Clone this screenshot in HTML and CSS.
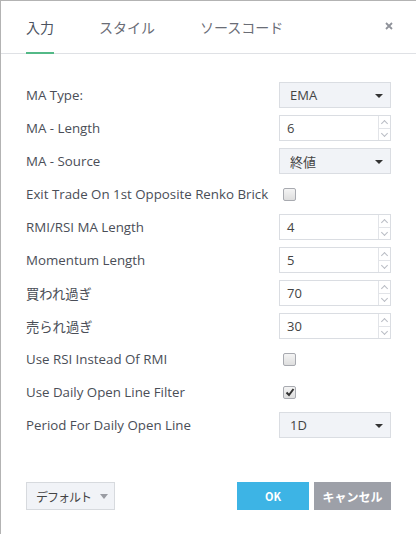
FILE: index.html
```html
<!DOCTYPE html>
<html lang="ja">
<head>
<meta charset="utf-8">
<link rel="stylesheet" href="styles.css">
</head>
<body>
<div class="dialog">
  <div class="tabs">
    <div class="tab active">入力</div>
    <div class="tab">スタイル</div>
    <div class="tab">ソースコード</div>
    <div class="close"><svg width="8" height="8" viewBox="0 0 8 8"><path d="M1 1L7 7M7 1L1 7" stroke="#8f929a" stroke-width="1.8"/></svg></div>
  </div>
  <div class="content">
    <div class="row"><span class="label">MA Type:</span><div class="select">EMA<span class="caret"></span></div></div>
    <div class="row"><span class="label">MA - Length</span><div class="num"><span class="val">6</span><span class="spin"><span class="up"></span><span class="down"></span></span></div></div>
    <div class="row"><span class="label">MA - Source</span><div class="select">終値<span class="caret"></span></div></div>
    <div class="row"><span class="label">Exit Trade On 1st Opposite Renko Brick</span><span class="check"></span></div>
    <div class="row"><span class="label">RMI/RSI MA Length</span><div class="num"><span class="val">4</span><span class="spin"><span class="up"></span><span class="down"></span></span></div></div>
    <div class="row"><span class="label">Momentum Length</span><div class="num"><span class="val">5</span><span class="spin"><span class="up"></span><span class="down"></span></span></div></div>
    <div class="row"><span class="label">買われ過ぎ</span><div class="num"><span class="val">70</span><span class="spin"><span class="up"></span><span class="down"></span></span></div></div>
    <div class="row"><span class="label">売られ過ぎ</span><div class="num"><span class="val">30</span><span class="spin"><span class="up"></span><span class="down"></span></span></div></div>
    <div class="row"><span class="label">Use RSI Instead Of RMI</span><span class="check"></span></div>
    <div class="row"><span class="label">Use Daily Open Line Filter</span><span class="check checked"><svg width="10" height="10" viewBox="0 0 10 10"><path d="M1.5 5.5L4 8L8.5 2" stroke="#333" stroke-width="2" fill="none"/></svg></span></div>
    <div class="row"><span class="label">Period For Daily Open Line</span><div class="select">1D<span class="caret"></span></div></div>
  </div>
  <div class="footer">
    <div class="default">デフォルト<span class="dcaret"></span></div>
    <div class="spacer"></div>
    <div class="btn ok">OK</div>
    <div class="btn cancel">キャンセル</div>
  </div>
</div>
</body>
</html>
```
FILE: styles.css
```css
html, body { margin: 0; padding: 0; background: #fff; }
body { font-family: "Open Sans", "Noto Sans CJK JP", sans-serif; color: #4a4e57; }
.dialog {
  width: 416px; height: 534px; box-sizing: border-box;
  border-top: 1px solid #b3b3b3; border-left: 1px solid #b3b3b3;
  display: flex; flex-direction: column;
}
.tabs {
  height: 53px; box-sizing: border-box; border-bottom: 1px solid #dfe1e5;
  display: flex; padding-left: 25px; gap: 45px;
}
.tab {
  font-size: 14px; color: #6a6d76; padding-top: 16px;
  font-family: "Noto Sans CJK JP", sans-serif;
  box-sizing: border-box; height: 53px;
}
.tab.active { color: #4c5361; border-bottom: 2px solid #53b987; }
.close { margin-left: auto; margin-right: 23px; padding-top: 21px; }
.close svg { display: block; }
.content { padding: 28px 25px 0 25px; display: flex; flex-direction: column; gap: 7px; }
.row { display: flex; align-items: center; justify-content: space-between; height: 26px; }
.label { font-size: 13.3px; color: #4a4e57; }
.select {
  width: 112px; height: 26px; box-sizing: border-box;
  background: #f1f3f7; border: 1px solid #dadde2;
  font-size: 13px; padding-left: 10px; display: flex; align-items: center;
  position: relative; color: #444;
}
.caret {
  position: absolute; right: 7px; top: 11px; width: 0; height: 0;
  border-left: 4px solid transparent; border-right: 4px solid transparent; border-top: 4px solid #333;
}
.num {
  width: 112px; height: 26px; box-sizing: border-box; border: 1px solid #dadde2;
  display: flex; font-size: 13px; color: #444;
}
.num .val { flex: 1; padding-left: 7px; display: flex; align-items: center; }
.spin { width: 11px; border-left: 1px solid #e2e4e8; display: flex; flex-direction: column; }
.spin span { flex: 1; position: relative; }
.spin .up { border-bottom: 1px solid #e2e4e8; }
.spin .up::after, .spin .down::after {
  content: ""; position: absolute; left: 3px; width: 4px; height: 4px;
  border-left: 1px solid #b9bcc4; border-top: 1px solid #b9bcc4;
}
.spin .up::after { top: 5px; transform: rotate(45deg); }
.spin .down::after { top: 2px; transform: rotate(225deg); }
.check {
  width: 11px; height: 11px; border: 1px solid #a8aab0; border-radius: 2px;
  background: linear-gradient(#f4f4f4, #dedede); margin-right: 95px;
  display: flex; align-items: center; justify-content: center;
}
.footer { margin-top: auto; padding: 0 25px 24px 25px; display: flex; gap: 5px; }
.spacer { flex: 1; }
.default {
  width: 89px; height: 28px; box-sizing: border-box; background: #f1f3f7; border: 1px solid #d7dade;
  font-family: "Noto Sans CJK JP", sans-serif; font-size: 12px; letter-spacing: -1px; color: #444;
  display: flex; align-items: center; padding-left: 9px;
}
.dcaret {
  width: 0; height: 0; margin-left: 9px;
  border-left: 4px solid transparent; border-right: 4px solid transparent; border-top: 5px solid #9a9ca3;
}
.btn {
  height: 28px; display: flex; align-items: center; justify-content: center;
  color: #fff; font-weight: bold; font-size: 12px;
  font-family: "Noto Sans CJK JP", sans-serif;
}
.ok { width: 72px; background: #3db4e5; font-size: 11px; }
.cancel { width: 77px; background: #9da0a8; }
```
